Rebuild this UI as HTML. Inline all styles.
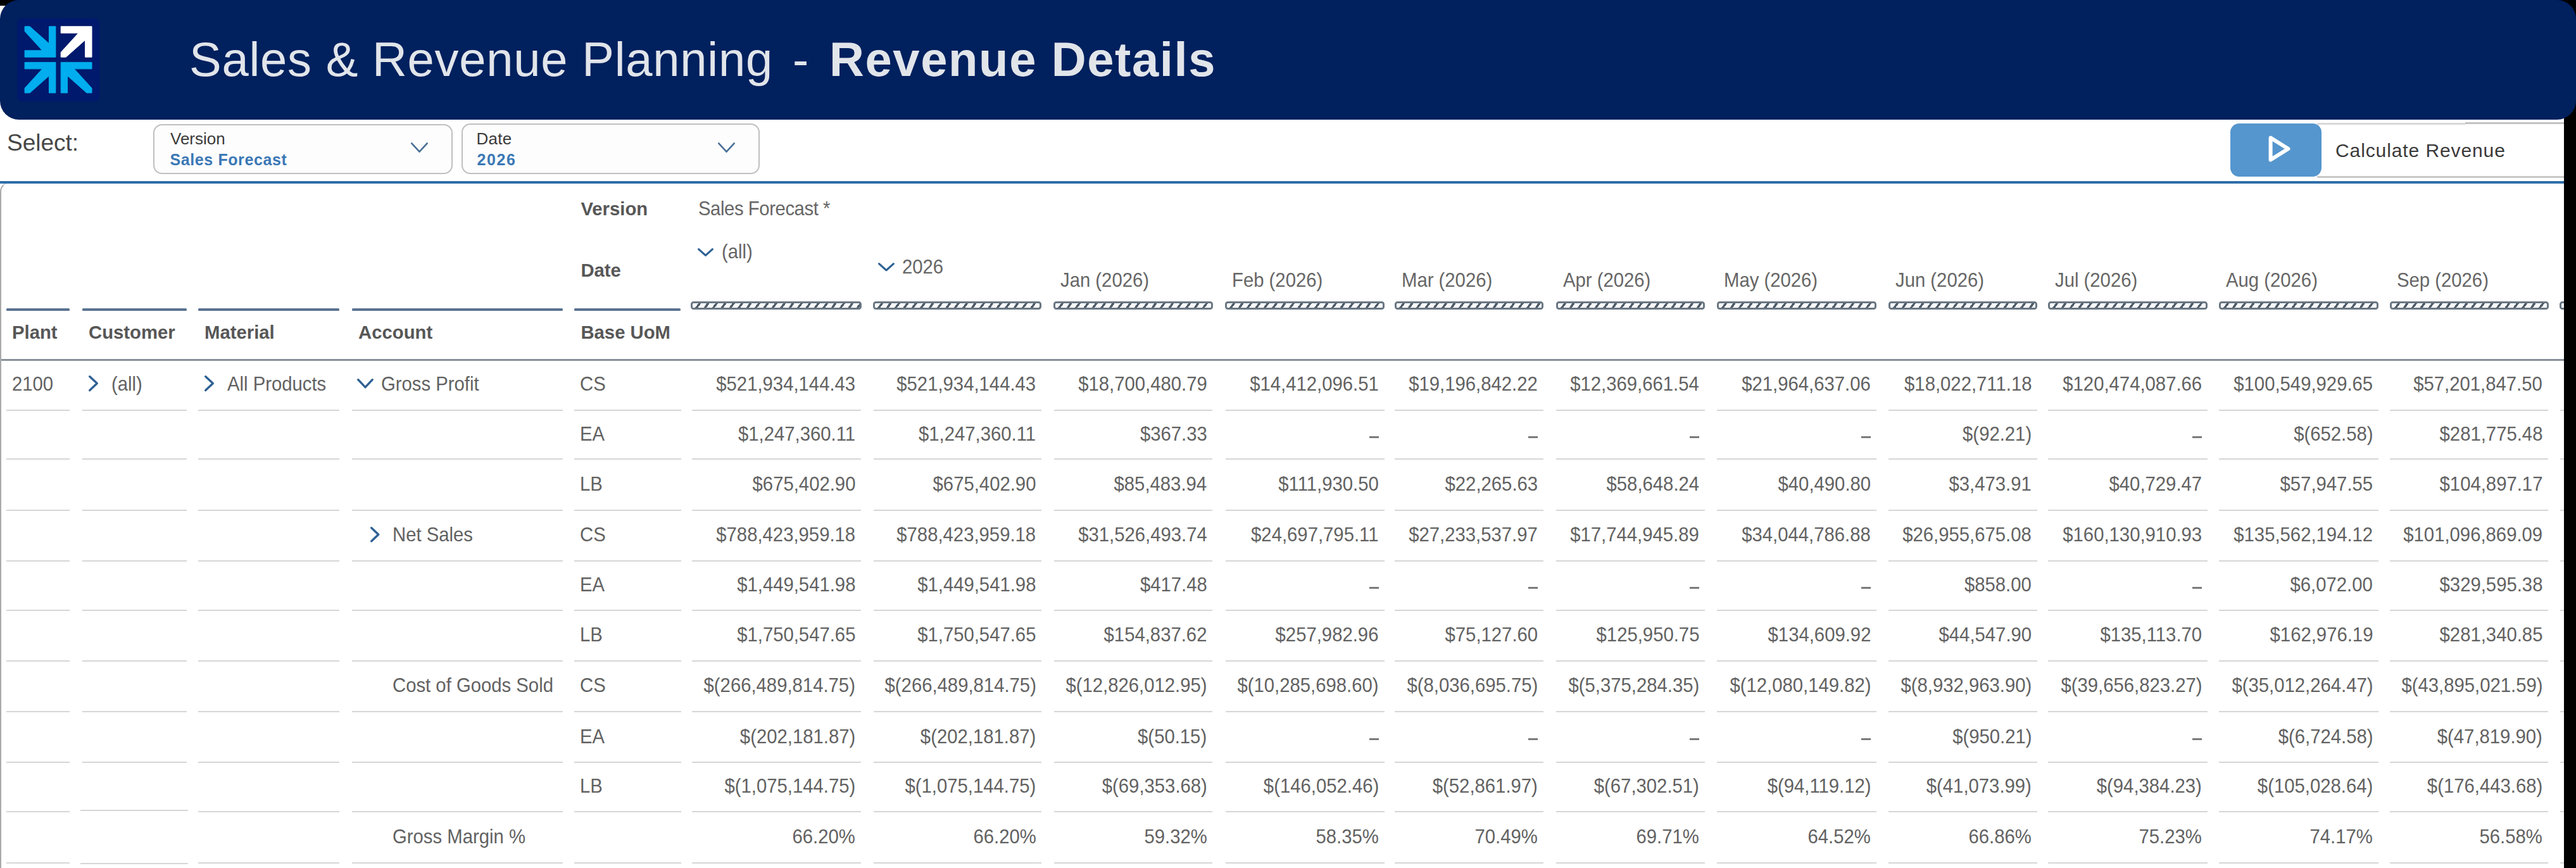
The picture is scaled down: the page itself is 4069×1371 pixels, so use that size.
<!DOCTYPE html><html><head><meta charset="utf-8"><style>
html,body{margin:0;padding:0;}
body{width:4069px;height:1371px;overflow:hidden;position:relative;background:#fff;font-family:"Liberation Sans", sans-serif;}
.t{position:absolute;white-space:nowrap;line-height:1;}
.r{position:absolute;}
.hb{position:absolute;top:475.5px;height:13px;box-sizing:border-box;border:3.4px solid #6a7783;border-radius:4.5px;
background:repeating-linear-gradient(126deg,#fafafa 0 7.4px,#4f5c6a 7.4px 10.84px);}

</style></head><body>
<div class="r" style="left:0.00px;top:0.00px;width:40.00px;height:9.00px;background:#000;"></div>
<div class="r" style="left:4020.00px;top:0.00px;width:49.00px;height:40.00px;background:#000;"></div>
<div class="r" style="left:4050.00px;top:150.00px;width:19.00px;height:38.50px;background:#000;"></div>
<div class="r" style="left:0;top:0;width:4069px;height:188.5px;background:#00205e;border-radius:30px;"></div>
<div class="r" style="left:27px;top:29px;width:130px;height:131px;background:#00196d;border-radius:8px;"></div>
<svg class="r" style="left:27px;top:29px" width="130" height="131" viewBox="0 0 130 131">
<g fill="#00adee" stroke="#00adee" stroke-width="1" stroke-linejoin="round"><polygon points="12.10,12.80 20.10,12.80 50.50,39.80 50.50,12.80 60.90,12.80 60.90,61.20 12.10,61.20 12.10,50.80 39.80,50.80 12.10,20.40"/><polygon points="12.10,117.80 20.10,117.80 50.50,90.80 50.50,117.80 60.90,117.80 60.90,69.40 12.10,69.40 12.10,79.80 39.80,79.80 12.10,110.20"/><polygon points="118.00,117.80 110.00,117.80 79.60,90.80 79.60,117.80 69.20,117.80 69.20,69.40 118.00,69.40 118.00,79.80 90.30,79.80 118.00,110.20"/></g>
<g fill="#fff" stroke="#fff" stroke-width="1" stroke-linejoin="round"><polygon points="69.20,61.20 77.20,61.20 107.60,34.20 107.60,61.20 118.00,61.20 118.00,12.80 69.20,12.80 69.20,23.20 96.90,23.20 69.20,53.60"/></g></svg>
<div class="t" style="top:55.65px;font-size:76px;font-weight:400;color:#e1e5ea;letter-spacing:0.74px;left:299.00px;">Sales &amp; Revenue Planning</div>
<div class="t" style="top:55.65px;font-size:76px;font-weight:400;color:#e1e5ea;left:1252.00px;">-</div>
<div class="t" style="top:55.65px;font-size:76px;font-weight:700;color:#e1e5ea;letter-spacing:1.6px;left:1310.00px;">Revenue Details</div>
<div class="t" style="top:207.27px;font-size:37px;font-weight:400;color:#474747;left:11.00px;">Select:</div>
<div class="r" style="left:242px;top:195.5px;width:473px;height:79px;box-sizing:border-box;border:2px solid #bfbfbf;border-radius:14px;background:#fdfdfd;"></div>
<div class="t" style="top:205.99px;font-size:26px;font-weight:400;color:#3a3a3a;left:269.00px;">Version</div>
<div class="t" style="top:239.53px;font-size:25px;font-weight:700;color:#3b78b5;letter-spacing:0.6px;left:268.50px;">Sales Forecast</div>
<svg class="r" style="left:645.5px;top:222px" width="33" height="22" viewBox="-3 -3 33 22"><polyline points="1.30,1.30 13.50,14.70 25.70,1.30" fill="none" stroke="#4a6f96" stroke-width="2.6" stroke-linecap="round" stroke-linejoin="round"/></svg>
<div class="r" style="left:729px;top:195px;width:471px;height:80px;box-sizing:border-box;border:2px solid #bfbfbf;border-radius:14px;background:#fdfdfd;"></div>
<div class="t" style="top:205.99px;font-size:26px;font-weight:400;color:#3a3a3a;letter-spacing:0.3px;left:752.40px;">Date</div>
<div class="t" style="top:239.53px;font-size:25px;font-weight:700;color:#3b78b5;letter-spacing:1.6px;left:753.50px;">2026</div>
<svg class="r" style="left:1130.7px;top:222px" width="33" height="22" viewBox="-3 -3 33 22"><polyline points="1.30,1.30 13.50,14.70 25.70,1.30" fill="none" stroke="#4a6f96" stroke-width="2.6" stroke-linecap="round" stroke-linejoin="round"/></svg>
<div class="r" style="left:3660.00px;top:194.40px;width:234.00px;height:3.00px;background:#d8d8d8;"></div>
<div class="r" style="left:3894.00px;top:193.00px;width:156.00px;height:3.00px;background:#c2c2c2;"></div>
<div class="r" style="left:3660.00px;top:277.50px;width:390.00px;height:3.20px;background:#c8c8c8;"></div>
<div class="r" style="left:3523px;top:195px;width:144px;height:84px;background:#5596ce;border-radius:14px;"></div>
<svg class="r" style="left:3570px;top:205px" width="60" height="60" viewBox="0 0 60 60"><polygon points="16.6,12.6 16.6,47.4 44.5,30" fill="none" stroke="#fff" stroke-width="6" stroke-linejoin="round"/></svg>
<div class="t" style="top:222.60px;font-size:30px;font-weight:400;color:#3a3a3a;letter-spacing:0.9px;left:3689.00px;">Calculate Revenue</div>
<div class="r" style="left:0;top:287px;width:40px;height:1100px;box-sizing:border-box;border-left:2.4px solid #a9a9a9;border-top:2px solid #d0d0d0;border-top-left-radius:16px;"></div>
<div class="r" style="left:0.00px;top:286.00px;width:4050.00px;height:4.00px;background:#2f6ea9;"></div>
<div class="t" style="top:315.19px;font-size:29.3px;font-weight:700;color:#575757;left:917.40px;">Version</div>
<div class="t" style="top:313.58px;font-size:31.2px;font-weight:400;color:#666;letter-spacing:-0.45px;left:1103.00px;transform:scaleX(0.939);transform-origin:left center;">Sales Forecast *</div>
<div class="t" style="top:412.19px;font-size:29.3px;font-weight:700;color:#575757;left:917.40px;">Date</div>
<svg class="r" style="left:1099px;top:389px" width="31" height="19" viewBox="-3 -3 31 19"><polyline points="1.60,1.60 12.50,11.40 23.40,1.60" fill="none" stroke="#2e6194" stroke-width="3.2" stroke-linecap="round" stroke-linejoin="round"/></svg>
<div class="t" style="top:381.58px;font-size:31.2px;font-weight:400;color:#666;left:1140.00px;transform:scaleX(0.939);transform-origin:left center;">(all)</div>
<svg class="r" style="left:1384px;top:412px" width="32" height="19.5" viewBox="-3 -3 32 19.5"><polyline points="1.60,1.60 13.00,11.90 24.40,1.60" fill="none" stroke="#2e6194" stroke-width="3.2" stroke-linecap="round" stroke-linejoin="round"/></svg>
<div class="t" style="top:405.58px;font-size:31.2px;font-weight:400;color:#666;left:1425.40px;transform:scaleX(0.939);transform-origin:left center;">2026</div>
<div class="t" style="top:426.58px;font-size:31.2px;font-weight:400;color:#666;left:1674.50px;transform:scaleX(0.939);transform-origin:left center;">Jan (2026)</div>
<div class="t" style="top:426.58px;font-size:31.2px;font-weight:400;color:#666;left:1945.50px;transform:scaleX(0.939);transform-origin:left center;">Feb (2026)</div>
<div class="t" style="top:426.58px;font-size:31.2px;font-weight:400;color:#666;left:2213.50px;transform:scaleX(0.939);transform-origin:left center;">Mar (2026)</div>
<div class="t" style="top:426.58px;font-size:31.2px;font-weight:400;color:#666;left:2468.50px;transform:scaleX(0.939);transform-origin:left center;">Apr (2026)</div>
<div class="t" style="top:426.58px;font-size:31.2px;font-weight:400;color:#666;left:2722.50px;transform:scaleX(0.939);transform-origin:left center;">May (2026)</div>
<div class="t" style="top:426.58px;font-size:31.2px;font-weight:400;color:#666;left:2993.50px;transform:scaleX(0.939);transform-origin:left center;">Jun (2026)</div>
<div class="t" style="top:426.58px;font-size:31.2px;font-weight:400;color:#666;left:3245.50px;transform:scaleX(0.939);transform-origin:left center;">Jul (2026)</div>
<div class="t" style="top:426.58px;font-size:31.2px;font-weight:400;color:#666;left:3515.50px;transform:scaleX(0.939);transform-origin:left center;">Aug (2026)</div>
<div class="t" style="top:426.58px;font-size:31.2px;font-weight:400;color:#666;left:3785.50px;transform:scaleX(0.939);transform-origin:left center;">Sep (2026)</div>
<div class="hb" style="left:1091px;width:270px;"></div>
<div class="hb" style="left:1379px;width:266px;"></div>
<div class="hb" style="left:1664px;width:252px;"></div>
<div class="hb" style="left:1935px;width:252px;"></div>
<div class="hb" style="left:2203px;width:235px;"></div>
<div class="hb" style="left:2458px;width:235px;"></div>
<div class="hb" style="left:2712px;width:252px;"></div>
<div class="hb" style="left:2983px;width:235px;"></div>
<div class="hb" style="left:3235px;width:252px;"></div>
<div class="hb" style="left:3505px;width:252px;"></div>
<div class="hb" style="left:3775px;width:251px;"></div>
<div class="hb" style="left:4043px;width:257px;"></div>
<div class="r" style="left:9.70px;top:487.30px;width:100.80px;height:3.70px;background:#5a7390;border-radius:1.5px;"></div>
<div class="r" style="left:129.50px;top:487.30px;width:165.00px;height:3.70px;background:#5a7390;border-radius:1.5px;"></div>
<div class="r" style="left:313.00px;top:487.30px;width:223.00px;height:3.70px;background:#5a7390;border-radius:1.5px;"></div>
<div class="r" style="left:555.50px;top:487.30px;width:333.50px;height:3.70px;background:#5a7390;border-radius:1.5px;"></div>
<div class="r" style="left:906.70px;top:487.30px;width:168.80px;height:3.70px;background:#5a7390;border-radius:1.5px;"></div>
<div class="t" style="top:510.19px;font-size:29.3px;font-weight:700;color:#575757;left:19.00px;">Plant</div>
<div class="t" style="top:510.19px;font-size:29.3px;font-weight:700;color:#575757;left:140.00px;">Customer</div>
<div class="t" style="top:510.19px;font-size:29.3px;font-weight:700;color:#575757;left:323.00px;">Material</div>
<div class="t" style="top:510.19px;font-size:29.3px;font-weight:700;color:#575757;left:566.00px;">Account</div>
<div class="t" style="top:510.19px;font-size:29.3px;font-weight:700;color:#575757;left:917.40px;">Base UoM</div>
<div class="r" style="left:2.40px;top:566.70px;width:4047.60px;height:3.80px;background:#88919a;"></div>
<div class="r" style="left:9.70px;top:647.00px;width:100.80px;height:2.00px;background:#d6d6d6;"></div>
<div class="r" style="left:129.50px;top:647.00px;width:165.00px;height:2.00px;background:#d6d6d6;"></div>
<div class="r" style="left:313.00px;top:647.00px;width:223.00px;height:2.00px;background:#d6d6d6;"></div>
<div class="r" style="left:556.00px;top:647.00px;width:333.00px;height:2.00px;background:#d6d6d6;"></div>
<div class="r" style="left:906.70px;top:647.00px;width:169.30px;height:2.00px;background:#d6d6d6;"></div>
<div class="r" style="left:1092.60px;top:647.00px;width:267.40px;height:2.00px;background:#d6d6d6;"></div>
<div class="r" style="left:1379.60px;top:647.00px;width:265.70px;height:2.00px;background:#d6d6d6;"></div>
<div class="r" style="left:1665.00px;top:647.00px;width:250.30px;height:2.00px;background:#d6d6d6;"></div>
<div class="r" style="left:1935.50px;top:647.00px;width:251.10px;height:2.00px;background:#d6d6d6;"></div>
<div class="r" style="left:2203.00px;top:647.00px;width:235.00px;height:2.00px;background:#d6d6d6;"></div>
<div class="r" style="left:2458.00px;top:647.00px;width:235.00px;height:2.00px;background:#d6d6d6;"></div>
<div class="r" style="left:2712.00px;top:647.00px;width:252.00px;height:2.00px;background:#d6d6d6;"></div>
<div class="r" style="left:2983.00px;top:647.00px;width:235.00px;height:2.00px;background:#d6d6d6;"></div>
<div class="r" style="left:3235.00px;top:647.00px;width:252.00px;height:2.00px;background:#d6d6d6;"></div>
<div class="r" style="left:3505.00px;top:647.00px;width:252.00px;height:2.00px;background:#d6d6d6;"></div>
<div class="r" style="left:3775.00px;top:647.00px;width:250.00px;height:2.00px;background:#d6d6d6;"></div>
<div class="r" style="left:4044.00px;top:647.00px;width:256.00px;height:2.00px;background:#d6d6d6;"></div>
<div class="r" style="left:9.70px;top:724.30px;width:100.80px;height:2.00px;background:#d6d6d6;"></div>
<div class="r" style="left:129.50px;top:724.30px;width:165.00px;height:2.00px;background:#d6d6d6;"></div>
<div class="r" style="left:313.00px;top:724.30px;width:223.00px;height:2.00px;background:#d6d6d6;"></div>
<div class="r" style="left:556.00px;top:724.30px;width:333.00px;height:2.00px;background:#d6d6d6;"></div>
<div class="r" style="left:906.70px;top:724.30px;width:169.30px;height:2.00px;background:#d6d6d6;"></div>
<div class="r" style="left:1092.60px;top:724.30px;width:267.40px;height:2.00px;background:#d6d6d6;"></div>
<div class="r" style="left:1379.60px;top:724.30px;width:265.70px;height:2.00px;background:#d6d6d6;"></div>
<div class="r" style="left:1665.00px;top:724.30px;width:250.30px;height:2.00px;background:#d6d6d6;"></div>
<div class="r" style="left:1935.50px;top:724.30px;width:251.10px;height:2.00px;background:#d6d6d6;"></div>
<div class="r" style="left:2203.00px;top:724.30px;width:235.00px;height:2.00px;background:#d6d6d6;"></div>
<div class="r" style="left:2458.00px;top:724.30px;width:235.00px;height:2.00px;background:#d6d6d6;"></div>
<div class="r" style="left:2712.00px;top:724.30px;width:252.00px;height:2.00px;background:#d6d6d6;"></div>
<div class="r" style="left:2983.00px;top:724.30px;width:235.00px;height:2.00px;background:#d6d6d6;"></div>
<div class="r" style="left:3235.00px;top:724.30px;width:252.00px;height:2.00px;background:#d6d6d6;"></div>
<div class="r" style="left:3505.00px;top:724.30px;width:252.00px;height:2.00px;background:#d6d6d6;"></div>
<div class="r" style="left:3775.00px;top:724.30px;width:250.00px;height:2.00px;background:#d6d6d6;"></div>
<div class="r" style="left:4044.00px;top:724.30px;width:256.00px;height:2.00px;background:#d6d6d6;"></div>
<div class="r" style="left:9.70px;top:804.50px;width:100.80px;height:2.00px;background:#d6d6d6;"></div>
<div class="r" style="left:129.50px;top:804.50px;width:165.00px;height:2.00px;background:#d6d6d6;"></div>
<div class="r" style="left:313.00px;top:804.50px;width:223.00px;height:2.00px;background:#d6d6d6;"></div>
<div class="r" style="left:556.00px;top:804.50px;width:333.00px;height:2.00px;background:#d6d6d6;"></div>
<div class="r" style="left:906.70px;top:804.50px;width:169.30px;height:2.00px;background:#d6d6d6;"></div>
<div class="r" style="left:1092.60px;top:804.50px;width:267.40px;height:2.00px;background:#d6d6d6;"></div>
<div class="r" style="left:1379.60px;top:804.50px;width:265.70px;height:2.00px;background:#d6d6d6;"></div>
<div class="r" style="left:1665.00px;top:804.50px;width:250.30px;height:2.00px;background:#d6d6d6;"></div>
<div class="r" style="left:1935.50px;top:804.50px;width:251.10px;height:2.00px;background:#d6d6d6;"></div>
<div class="r" style="left:2203.00px;top:804.50px;width:235.00px;height:2.00px;background:#d6d6d6;"></div>
<div class="r" style="left:2458.00px;top:804.50px;width:235.00px;height:2.00px;background:#d6d6d6;"></div>
<div class="r" style="left:2712.00px;top:804.50px;width:252.00px;height:2.00px;background:#d6d6d6;"></div>
<div class="r" style="left:2983.00px;top:804.50px;width:235.00px;height:2.00px;background:#d6d6d6;"></div>
<div class="r" style="left:3235.00px;top:804.50px;width:252.00px;height:2.00px;background:#d6d6d6;"></div>
<div class="r" style="left:3505.00px;top:804.50px;width:252.00px;height:2.00px;background:#d6d6d6;"></div>
<div class="r" style="left:3775.00px;top:804.50px;width:250.00px;height:2.00px;background:#d6d6d6;"></div>
<div class="r" style="left:4044.00px;top:804.50px;width:256.00px;height:2.00px;background:#d6d6d6;"></div>
<div class="r" style="left:9.70px;top:884.70px;width:100.80px;height:2.00px;background:#d6d6d6;"></div>
<div class="r" style="left:129.50px;top:884.70px;width:165.00px;height:2.00px;background:#d6d6d6;"></div>
<div class="r" style="left:313.00px;top:884.70px;width:223.00px;height:2.00px;background:#d6d6d6;"></div>
<div class="r" style="left:556.00px;top:884.70px;width:333.00px;height:2.00px;background:#d6d6d6;"></div>
<div class="r" style="left:906.70px;top:884.70px;width:169.30px;height:2.00px;background:#d6d6d6;"></div>
<div class="r" style="left:1092.60px;top:884.70px;width:267.40px;height:2.00px;background:#d6d6d6;"></div>
<div class="r" style="left:1379.60px;top:884.70px;width:265.70px;height:2.00px;background:#d6d6d6;"></div>
<div class="r" style="left:1665.00px;top:884.70px;width:250.30px;height:2.00px;background:#d6d6d6;"></div>
<div class="r" style="left:1935.50px;top:884.70px;width:251.10px;height:2.00px;background:#d6d6d6;"></div>
<div class="r" style="left:2203.00px;top:884.70px;width:235.00px;height:2.00px;background:#d6d6d6;"></div>
<div class="r" style="left:2458.00px;top:884.70px;width:235.00px;height:2.00px;background:#d6d6d6;"></div>
<div class="r" style="left:2712.00px;top:884.70px;width:252.00px;height:2.00px;background:#d6d6d6;"></div>
<div class="r" style="left:2983.00px;top:884.70px;width:235.00px;height:2.00px;background:#d6d6d6;"></div>
<div class="r" style="left:3235.00px;top:884.70px;width:252.00px;height:2.00px;background:#d6d6d6;"></div>
<div class="r" style="left:3505.00px;top:884.70px;width:252.00px;height:2.00px;background:#d6d6d6;"></div>
<div class="r" style="left:3775.00px;top:884.70px;width:250.00px;height:2.00px;background:#d6d6d6;"></div>
<div class="r" style="left:4044.00px;top:884.70px;width:256.00px;height:2.00px;background:#d6d6d6;"></div>
<div class="r" style="left:9.70px;top:962.50px;width:100.80px;height:2.00px;background:#d6d6d6;"></div>
<div class="r" style="left:129.50px;top:962.50px;width:165.00px;height:2.00px;background:#d6d6d6;"></div>
<div class="r" style="left:313.00px;top:962.50px;width:223.00px;height:2.00px;background:#d6d6d6;"></div>
<div class="r" style="left:556.00px;top:962.50px;width:333.00px;height:2.00px;background:#d6d6d6;"></div>
<div class="r" style="left:906.70px;top:962.50px;width:169.30px;height:2.00px;background:#d6d6d6;"></div>
<div class="r" style="left:1092.60px;top:962.50px;width:267.40px;height:2.00px;background:#d6d6d6;"></div>
<div class="r" style="left:1379.60px;top:962.50px;width:265.70px;height:2.00px;background:#d6d6d6;"></div>
<div class="r" style="left:1665.00px;top:962.50px;width:250.30px;height:2.00px;background:#d6d6d6;"></div>
<div class="r" style="left:1935.50px;top:962.50px;width:251.10px;height:2.00px;background:#d6d6d6;"></div>
<div class="r" style="left:2203.00px;top:962.50px;width:235.00px;height:2.00px;background:#d6d6d6;"></div>
<div class="r" style="left:2458.00px;top:962.50px;width:235.00px;height:2.00px;background:#d6d6d6;"></div>
<div class="r" style="left:2712.00px;top:962.50px;width:252.00px;height:2.00px;background:#d6d6d6;"></div>
<div class="r" style="left:2983.00px;top:962.50px;width:235.00px;height:2.00px;background:#d6d6d6;"></div>
<div class="r" style="left:3235.00px;top:962.50px;width:252.00px;height:2.00px;background:#d6d6d6;"></div>
<div class="r" style="left:3505.00px;top:962.50px;width:252.00px;height:2.00px;background:#d6d6d6;"></div>
<div class="r" style="left:3775.00px;top:962.50px;width:250.00px;height:2.00px;background:#d6d6d6;"></div>
<div class="r" style="left:4044.00px;top:962.50px;width:256.00px;height:2.00px;background:#d6d6d6;"></div>
<div class="r" style="left:9.70px;top:1042.70px;width:100.80px;height:2.00px;background:#d6d6d6;"></div>
<div class="r" style="left:129.50px;top:1042.70px;width:165.00px;height:2.00px;background:#d6d6d6;"></div>
<div class="r" style="left:313.00px;top:1042.70px;width:223.00px;height:2.00px;background:#d6d6d6;"></div>
<div class="r" style="left:556.00px;top:1042.70px;width:333.00px;height:2.00px;background:#d6d6d6;"></div>
<div class="r" style="left:906.70px;top:1042.70px;width:169.30px;height:2.00px;background:#d6d6d6;"></div>
<div class="r" style="left:1092.60px;top:1042.70px;width:267.40px;height:2.00px;background:#d6d6d6;"></div>
<div class="r" style="left:1379.60px;top:1042.70px;width:265.70px;height:2.00px;background:#d6d6d6;"></div>
<div class="r" style="left:1665.00px;top:1042.70px;width:250.30px;height:2.00px;background:#d6d6d6;"></div>
<div class="r" style="left:1935.50px;top:1042.70px;width:251.10px;height:2.00px;background:#d6d6d6;"></div>
<div class="r" style="left:2203.00px;top:1042.70px;width:235.00px;height:2.00px;background:#d6d6d6;"></div>
<div class="r" style="left:2458.00px;top:1042.70px;width:235.00px;height:2.00px;background:#d6d6d6;"></div>
<div class="r" style="left:2712.00px;top:1042.70px;width:252.00px;height:2.00px;background:#d6d6d6;"></div>
<div class="r" style="left:2983.00px;top:1042.70px;width:235.00px;height:2.00px;background:#d6d6d6;"></div>
<div class="r" style="left:3235.00px;top:1042.70px;width:252.00px;height:2.00px;background:#d6d6d6;"></div>
<div class="r" style="left:3505.00px;top:1042.70px;width:252.00px;height:2.00px;background:#d6d6d6;"></div>
<div class="r" style="left:3775.00px;top:1042.70px;width:250.00px;height:2.00px;background:#d6d6d6;"></div>
<div class="r" style="left:4044.00px;top:1042.70px;width:256.00px;height:2.00px;background:#d6d6d6;"></div>
<div class="r" style="left:9.70px;top:1123.30px;width:100.80px;height:2.00px;background:#d6d6d6;"></div>
<div class="r" style="left:129.50px;top:1123.30px;width:165.00px;height:2.00px;background:#d6d6d6;"></div>
<div class="r" style="left:313.00px;top:1123.30px;width:223.00px;height:2.00px;background:#d6d6d6;"></div>
<div class="r" style="left:556.00px;top:1123.30px;width:333.00px;height:2.00px;background:#d6d6d6;"></div>
<div class="r" style="left:906.70px;top:1123.30px;width:169.30px;height:2.00px;background:#d6d6d6;"></div>
<div class="r" style="left:1092.60px;top:1123.30px;width:267.40px;height:2.00px;background:#d6d6d6;"></div>
<div class="r" style="left:1379.60px;top:1123.30px;width:265.70px;height:2.00px;background:#d6d6d6;"></div>
<div class="r" style="left:1665.00px;top:1123.30px;width:250.30px;height:2.00px;background:#d6d6d6;"></div>
<div class="r" style="left:1935.50px;top:1123.30px;width:251.10px;height:2.00px;background:#d6d6d6;"></div>
<div class="r" style="left:2203.00px;top:1123.30px;width:235.00px;height:2.00px;background:#d6d6d6;"></div>
<div class="r" style="left:2458.00px;top:1123.30px;width:235.00px;height:2.00px;background:#d6d6d6;"></div>
<div class="r" style="left:2712.00px;top:1123.30px;width:252.00px;height:2.00px;background:#d6d6d6;"></div>
<div class="r" style="left:2983.00px;top:1123.30px;width:235.00px;height:2.00px;background:#d6d6d6;"></div>
<div class="r" style="left:3235.00px;top:1123.30px;width:252.00px;height:2.00px;background:#d6d6d6;"></div>
<div class="r" style="left:3505.00px;top:1123.30px;width:252.00px;height:2.00px;background:#d6d6d6;"></div>
<div class="r" style="left:3775.00px;top:1123.30px;width:250.00px;height:2.00px;background:#d6d6d6;"></div>
<div class="r" style="left:4044.00px;top:1123.30px;width:256.00px;height:2.00px;background:#d6d6d6;"></div>
<div class="r" style="left:9.70px;top:1203.40px;width:100.80px;height:2.00px;background:#d6d6d6;"></div>
<div class="r" style="left:129.50px;top:1203.40px;width:165.00px;height:2.00px;background:#d6d6d6;"></div>
<div class="r" style="left:313.00px;top:1203.40px;width:223.00px;height:2.00px;background:#d6d6d6;"></div>
<div class="r" style="left:556.00px;top:1203.40px;width:333.00px;height:2.00px;background:#d6d6d6;"></div>
<div class="r" style="left:906.70px;top:1203.40px;width:169.30px;height:2.00px;background:#d6d6d6;"></div>
<div class="r" style="left:1092.60px;top:1203.40px;width:267.40px;height:2.00px;background:#d6d6d6;"></div>
<div class="r" style="left:1379.60px;top:1203.40px;width:265.70px;height:2.00px;background:#d6d6d6;"></div>
<div class="r" style="left:1665.00px;top:1203.40px;width:250.30px;height:2.00px;background:#d6d6d6;"></div>
<div class="r" style="left:1935.50px;top:1203.40px;width:251.10px;height:2.00px;background:#d6d6d6;"></div>
<div class="r" style="left:2203.00px;top:1203.40px;width:235.00px;height:2.00px;background:#d6d6d6;"></div>
<div class="r" style="left:2458.00px;top:1203.40px;width:235.00px;height:2.00px;background:#d6d6d6;"></div>
<div class="r" style="left:2712.00px;top:1203.40px;width:252.00px;height:2.00px;background:#d6d6d6;"></div>
<div class="r" style="left:2983.00px;top:1203.40px;width:235.00px;height:2.00px;background:#d6d6d6;"></div>
<div class="r" style="left:3235.00px;top:1203.40px;width:252.00px;height:2.00px;background:#d6d6d6;"></div>
<div class="r" style="left:3505.00px;top:1203.40px;width:252.00px;height:2.00px;background:#d6d6d6;"></div>
<div class="r" style="left:3775.00px;top:1203.40px;width:250.00px;height:2.00px;background:#d6d6d6;"></div>
<div class="r" style="left:4044.00px;top:1203.40px;width:256.00px;height:2.00px;background:#d6d6d6;"></div>
<div class="r" style="left:9.70px;top:1281.20px;width:100.80px;height:2.00px;background:#d6d6d6;"></div>
<div class="r" style="left:126.50px;top:1279.20px;width:170.10px;height:2.00px;background:#d6d6d6;"></div>
<div class="r" style="left:313.00px;top:1281.20px;width:223.00px;height:2.00px;background:#d6d6d6;"></div>
<div class="r" style="left:556.00px;top:1281.20px;width:333.00px;height:2.00px;background:#d6d6d6;"></div>
<div class="r" style="left:906.70px;top:1281.20px;width:169.30px;height:2.00px;background:#d6d6d6;"></div>
<div class="r" style="left:1092.60px;top:1281.20px;width:267.40px;height:2.00px;background:#d6d6d6;"></div>
<div class="r" style="left:1379.60px;top:1281.20px;width:265.70px;height:2.00px;background:#d6d6d6;"></div>
<div class="r" style="left:1665.00px;top:1281.20px;width:250.30px;height:2.00px;background:#d6d6d6;"></div>
<div class="r" style="left:1935.50px;top:1281.20px;width:251.10px;height:2.00px;background:#d6d6d6;"></div>
<div class="r" style="left:2203.00px;top:1281.20px;width:235.00px;height:2.00px;background:#d6d6d6;"></div>
<div class="r" style="left:2458.00px;top:1281.20px;width:235.00px;height:2.00px;background:#d6d6d6;"></div>
<div class="r" style="left:2712.00px;top:1281.20px;width:252.00px;height:2.00px;background:#d6d6d6;"></div>
<div class="r" style="left:2983.00px;top:1281.20px;width:235.00px;height:2.00px;background:#d6d6d6;"></div>
<div class="r" style="left:3235.00px;top:1281.20px;width:252.00px;height:2.00px;background:#d6d6d6;"></div>
<div class="r" style="left:3505.00px;top:1281.20px;width:252.00px;height:2.00px;background:#d6d6d6;"></div>
<div class="r" style="left:3775.00px;top:1281.20px;width:250.00px;height:2.00px;background:#d6d6d6;"></div>
<div class="r" style="left:4044.00px;top:1281.20px;width:256.00px;height:2.00px;background:#d6d6d6;"></div>
<div class="r" style="left:9.70px;top:1361.70px;width:100.80px;height:2.00px;background:#d6d6d6;"></div>
<div class="r" style="left:126.50px;top:1363.00px;width:170.10px;height:2.00px;background:#d6d6d6;"></div>
<div class="r" style="left:313.00px;top:1361.70px;width:223.00px;height:2.00px;background:#d6d6d6;"></div>
<div class="r" style="left:556.00px;top:1361.70px;width:333.00px;height:2.00px;background:#d6d6d6;"></div>
<div class="r" style="left:906.70px;top:1361.70px;width:169.30px;height:2.00px;background:#d6d6d6;"></div>
<div class="r" style="left:1092.60px;top:1361.70px;width:267.40px;height:2.00px;background:#d6d6d6;"></div>
<div class="r" style="left:1379.60px;top:1361.70px;width:265.70px;height:2.00px;background:#d6d6d6;"></div>
<div class="r" style="left:1665.00px;top:1361.70px;width:250.30px;height:2.00px;background:#d6d6d6;"></div>
<div class="r" style="left:1935.50px;top:1361.70px;width:251.10px;height:2.00px;background:#d6d6d6;"></div>
<div class="r" style="left:2203.00px;top:1361.70px;width:235.00px;height:2.00px;background:#d6d6d6;"></div>
<div class="r" style="left:2458.00px;top:1361.70px;width:235.00px;height:2.00px;background:#d6d6d6;"></div>
<div class="r" style="left:2712.00px;top:1361.70px;width:252.00px;height:2.00px;background:#d6d6d6;"></div>
<div class="r" style="left:2983.00px;top:1361.70px;width:235.00px;height:2.00px;background:#d6d6d6;"></div>
<div class="r" style="left:3235.00px;top:1361.70px;width:252.00px;height:2.00px;background:#d6d6d6;"></div>
<div class="r" style="left:3505.00px;top:1361.70px;width:252.00px;height:2.00px;background:#d6d6d6;"></div>
<div class="r" style="left:3775.00px;top:1361.70px;width:250.00px;height:2.00px;background:#d6d6d6;"></div>
<div class="r" style="left:4044.00px;top:1361.70px;width:256.00px;height:2.00px;background:#d6d6d6;"></div>
<div class="t" style="top:591.43px;font-size:31.2px;font-weight:400;color:#626262;left:915.80px;transform:scaleX(0.939);transform-origin:left center;">CS</div>
<div class="t" style="top:591.43px;font-size:31.2px;font-weight:400;color:#626262;right:2717.80px;transform:scaleX(0.939);transform-origin:right center;">$521,934,144.43</div>
<div class="t" style="top:591.43px;font-size:31.2px;font-weight:400;color:#626262;right:2432.50px;transform:scaleX(0.939);transform-origin:right center;">$521,934,144.43</div>
<div class="t" style="top:591.43px;font-size:31.2px;font-weight:400;color:#626262;right:2162.50px;transform:scaleX(0.939);transform-origin:right center;">$18,700,480.79</div>
<div class="t" style="top:591.43px;font-size:31.2px;font-weight:400;color:#626262;right:1891.20px;transform:scaleX(0.939);transform-origin:right center;">$14,412,096.51</div>
<div class="t" style="top:591.43px;font-size:31.2px;font-weight:400;color:#626262;right:1639.80px;transform:scaleX(0.939);transform-origin:right center;">$19,196,842.22</div>
<div class="t" style="top:591.43px;font-size:31.2px;font-weight:400;color:#626262;right:1384.80px;transform:scaleX(0.939);transform-origin:right center;">$12,369,661.54</div>
<div class="t" style="top:591.43px;font-size:31.2px;font-weight:400;color:#626262;right:1113.80px;transform:scaleX(0.939);transform-origin:right center;">$21,964,637.06</div>
<div class="t" style="top:591.43px;font-size:31.2px;font-weight:400;color:#626262;right:859.80px;transform:scaleX(0.939);transform-origin:right center;">$18,022,711.18</div>
<div class="t" style="top:591.43px;font-size:31.2px;font-weight:400;color:#626262;right:590.80px;transform:scaleX(0.939);transform-origin:right center;">$120,474,087.66</div>
<div class="t" style="top:591.43px;font-size:31.2px;font-weight:400;color:#626262;right:320.80px;transform:scaleX(0.939);transform-origin:right center;">$100,549,929.65</div>
<div class="t" style="top:591.43px;font-size:31.2px;font-weight:400;color:#626262;right:52.80px;transform:scaleX(0.939);transform-origin:right center;">$57,201,847.50</div>
<div class="t" style="top:669.83px;font-size:31.2px;font-weight:400;color:#626262;left:915.80px;transform:scaleX(0.939);transform-origin:left center;">EA</div>
<div class="t" style="top:669.83px;font-size:31.2px;font-weight:400;color:#626262;right:2717.80px;transform:scaleX(0.939);transform-origin:right center;">$1,247,360.11</div>
<div class="t" style="top:669.83px;font-size:31.2px;font-weight:400;color:#626262;right:2432.50px;transform:scaleX(0.939);transform-origin:right center;">$1,247,360.11</div>
<div class="t" style="top:669.83px;font-size:31.2px;font-weight:400;color:#626262;right:2162.50px;transform:scaleX(0.939);transform-origin:right center;">$367.33</div>
<div class="r" style="left:2162.50px;top:688.65px;width:15.00px;height:3.00px;background:#7a7a7a;"></div>
<div class="r" style="left:2413.90px;top:688.65px;width:15.00px;height:3.00px;background:#7a7a7a;"></div>
<div class="r" style="left:2668.90px;top:688.65px;width:15.00px;height:3.00px;background:#7a7a7a;"></div>
<div class="r" style="left:2939.90px;top:688.65px;width:15.00px;height:3.00px;background:#7a7a7a;"></div>
<div class="t" style="top:669.83px;font-size:31.2px;font-weight:400;color:#626262;right:859.80px;transform:scaleX(0.939);transform-origin:right center;">$(92.21)</div>
<div class="r" style="left:3462.90px;top:688.65px;width:15.00px;height:3.00px;background:#7a7a7a;"></div>
<div class="t" style="top:669.83px;font-size:31.2px;font-weight:400;color:#626262;right:320.80px;transform:scaleX(0.939);transform-origin:right center;">$(652.58)</div>
<div class="t" style="top:669.83px;font-size:31.2px;font-weight:400;color:#626262;right:52.80px;transform:scaleX(0.939);transform-origin:right center;">$281,775.48</div>
<div class="t" style="top:748.58px;font-size:31.2px;font-weight:400;color:#626262;left:915.80px;transform:scaleX(0.939);transform-origin:left center;">LB</div>
<div class="t" style="top:748.58px;font-size:31.2px;font-weight:400;color:#626262;right:2717.80px;transform:scaleX(0.939);transform-origin:right center;">$675,402.90</div>
<div class="t" style="top:748.58px;font-size:31.2px;font-weight:400;color:#626262;right:2432.50px;transform:scaleX(0.939);transform-origin:right center;">$675,402.90</div>
<div class="t" style="top:748.58px;font-size:31.2px;font-weight:400;color:#626262;right:2162.50px;transform:scaleX(0.939);transform-origin:right center;">$85,483.94</div>
<div class="t" style="top:748.58px;font-size:31.2px;font-weight:400;color:#626262;right:1891.20px;transform:scaleX(0.939);transform-origin:right center;">$111,930.50</div>
<div class="t" style="top:748.58px;font-size:31.2px;font-weight:400;color:#626262;right:1639.80px;transform:scaleX(0.939);transform-origin:right center;">$22,265.63</div>
<div class="t" style="top:748.58px;font-size:31.2px;font-weight:400;color:#626262;right:1384.80px;transform:scaleX(0.939);transform-origin:right center;">$58,648.24</div>
<div class="t" style="top:748.58px;font-size:31.2px;font-weight:400;color:#626262;right:1113.80px;transform:scaleX(0.939);transform-origin:right center;">$40,490.80</div>
<div class="t" style="top:748.58px;font-size:31.2px;font-weight:400;color:#626262;right:859.80px;transform:scaleX(0.939);transform-origin:right center;">$3,473.91</div>
<div class="t" style="top:748.58px;font-size:31.2px;font-weight:400;color:#626262;right:590.80px;transform:scaleX(0.939);transform-origin:right center;">$40,729.47</div>
<div class="t" style="top:748.58px;font-size:31.2px;font-weight:400;color:#626262;right:320.80px;transform:scaleX(0.939);transform-origin:right center;">$57,947.55</div>
<div class="t" style="top:748.58px;font-size:31.2px;font-weight:400;color:#626262;right:52.80px;transform:scaleX(0.939);transform-origin:right center;">$104,897.17</div>
<div class="t" style="top:828.78px;font-size:31.2px;font-weight:400;color:#626262;left:915.80px;transform:scaleX(0.939);transform-origin:left center;">CS</div>
<div class="t" style="top:828.78px;font-size:31.2px;font-weight:400;color:#626262;right:2717.80px;transform:scaleX(0.939);transform-origin:right center;">$788,423,959.18</div>
<div class="t" style="top:828.78px;font-size:31.2px;font-weight:400;color:#626262;right:2432.50px;transform:scaleX(0.939);transform-origin:right center;">$788,423,959.18</div>
<div class="t" style="top:828.78px;font-size:31.2px;font-weight:400;color:#626262;right:2162.50px;transform:scaleX(0.939);transform-origin:right center;">$31,526,493.74</div>
<div class="t" style="top:828.78px;font-size:31.2px;font-weight:400;color:#626262;right:1891.20px;transform:scaleX(0.939);transform-origin:right center;">$24,697,795.11</div>
<div class="t" style="top:828.78px;font-size:31.2px;font-weight:400;color:#626262;right:1639.80px;transform:scaleX(0.939);transform-origin:right center;">$27,233,537.97</div>
<div class="t" style="top:828.78px;font-size:31.2px;font-weight:400;color:#626262;right:1384.80px;transform:scaleX(0.939);transform-origin:right center;">$17,744,945.89</div>
<div class="t" style="top:828.78px;font-size:31.2px;font-weight:400;color:#626262;right:1113.80px;transform:scaleX(0.939);transform-origin:right center;">$34,044,786.88</div>
<div class="t" style="top:828.78px;font-size:31.2px;font-weight:400;color:#626262;right:859.80px;transform:scaleX(0.939);transform-origin:right center;">$26,955,675.08</div>
<div class="t" style="top:828.78px;font-size:31.2px;font-weight:400;color:#626262;right:590.80px;transform:scaleX(0.939);transform-origin:right center;">$160,130,910.93</div>
<div class="t" style="top:828.78px;font-size:31.2px;font-weight:400;color:#626262;right:320.80px;transform:scaleX(0.939);transform-origin:right center;">$135,562,194.12</div>
<div class="t" style="top:828.78px;font-size:31.2px;font-weight:400;color:#626262;right:52.80px;transform:scaleX(0.939);transform-origin:right center;">$101,096,869.09</div>
<div class="t" style="top:907.78px;font-size:31.2px;font-weight:400;color:#626262;left:915.80px;transform:scaleX(0.939);transform-origin:left center;">EA</div>
<div class="t" style="top:907.78px;font-size:31.2px;font-weight:400;color:#626262;right:2717.80px;transform:scaleX(0.939);transform-origin:right center;">$1,449,541.98</div>
<div class="t" style="top:907.78px;font-size:31.2px;font-weight:400;color:#626262;right:2432.50px;transform:scaleX(0.939);transform-origin:right center;">$1,449,541.98</div>
<div class="t" style="top:907.78px;font-size:31.2px;font-weight:400;color:#626262;right:2162.50px;transform:scaleX(0.939);transform-origin:right center;">$417.48</div>
<div class="r" style="left:2162.50px;top:926.60px;width:15.00px;height:3.00px;background:#7a7a7a;"></div>
<div class="r" style="left:2413.90px;top:926.60px;width:15.00px;height:3.00px;background:#7a7a7a;"></div>
<div class="r" style="left:2668.90px;top:926.60px;width:15.00px;height:3.00px;background:#7a7a7a;"></div>
<div class="r" style="left:2939.90px;top:926.60px;width:15.00px;height:3.00px;background:#7a7a7a;"></div>
<div class="t" style="top:907.78px;font-size:31.2px;font-weight:400;color:#626262;right:859.80px;transform:scaleX(0.939);transform-origin:right center;">$858.00</div>
<div class="r" style="left:3462.90px;top:926.60px;width:15.00px;height:3.00px;background:#7a7a7a;"></div>
<div class="t" style="top:907.78px;font-size:31.2px;font-weight:400;color:#626262;right:320.80px;transform:scaleX(0.939);transform-origin:right center;">$6,072.00</div>
<div class="t" style="top:907.78px;font-size:31.2px;font-weight:400;color:#626262;right:52.80px;transform:scaleX(0.939);transform-origin:right center;">$329,595.38</div>
<div class="t" style="top:986.78px;font-size:31.2px;font-weight:400;color:#626262;left:915.80px;transform:scaleX(0.939);transform-origin:left center;">LB</div>
<div class="t" style="top:986.78px;font-size:31.2px;font-weight:400;color:#626262;right:2717.80px;transform:scaleX(0.939);transform-origin:right center;">$1,750,547.65</div>
<div class="t" style="top:986.78px;font-size:31.2px;font-weight:400;color:#626262;right:2432.50px;transform:scaleX(0.939);transform-origin:right center;">$1,750,547.65</div>
<div class="t" style="top:986.78px;font-size:31.2px;font-weight:400;color:#626262;right:2162.50px;transform:scaleX(0.939);transform-origin:right center;">$154,837.62</div>
<div class="t" style="top:986.78px;font-size:31.2px;font-weight:400;color:#626262;right:1891.20px;transform:scaleX(0.939);transform-origin:right center;">$257,982.96</div>
<div class="t" style="top:986.78px;font-size:31.2px;font-weight:400;color:#626262;right:1639.80px;transform:scaleX(0.939);transform-origin:right center;">$75,127.60</div>
<div class="t" style="top:986.78px;font-size:31.2px;font-weight:400;color:#626262;right:1384.80px;transform:scaleX(0.939);transform-origin:right center;">$125,950.75</div>
<div class="t" style="top:986.78px;font-size:31.2px;font-weight:400;color:#626262;right:1113.80px;transform:scaleX(0.939);transform-origin:right center;">$134,609.92</div>
<div class="t" style="top:986.78px;font-size:31.2px;font-weight:400;color:#626262;right:859.80px;transform:scaleX(0.939);transform-origin:right center;">$44,547.90</div>
<div class="t" style="top:986.78px;font-size:31.2px;font-weight:400;color:#626262;right:590.80px;transform:scaleX(0.939);transform-origin:right center;">$135,113.70</div>
<div class="t" style="top:986.78px;font-size:31.2px;font-weight:400;color:#626262;right:320.80px;transform:scaleX(0.939);transform-origin:right center;">$162,976.19</div>
<div class="t" style="top:986.78px;font-size:31.2px;font-weight:400;color:#626262;right:52.80px;transform:scaleX(0.939);transform-origin:right center;">$281,340.85</div>
<div class="t" style="top:1067.18px;font-size:31.2px;font-weight:400;color:#626262;left:915.80px;transform:scaleX(0.939);transform-origin:left center;">CS</div>
<div class="t" style="top:1067.18px;font-size:31.2px;font-weight:400;color:#626262;right:2717.80px;transform:scaleX(0.939);transform-origin:right center;">$(266,489,814.75)</div>
<div class="t" style="top:1067.18px;font-size:31.2px;font-weight:400;color:#626262;right:2432.50px;transform:scaleX(0.939);transform-origin:right center;">$(266,489,814.75)</div>
<div class="t" style="top:1067.18px;font-size:31.2px;font-weight:400;color:#626262;right:2162.50px;transform:scaleX(0.939);transform-origin:right center;">$(12,826,012.95)</div>
<div class="t" style="top:1067.18px;font-size:31.2px;font-weight:400;color:#626262;right:1891.20px;transform:scaleX(0.939);transform-origin:right center;">$(10,285,698.60)</div>
<div class="t" style="top:1067.18px;font-size:31.2px;font-weight:400;color:#626262;right:1639.80px;transform:scaleX(0.939);transform-origin:right center;">$(8,036,695.75)</div>
<div class="t" style="top:1067.18px;font-size:31.2px;font-weight:400;color:#626262;right:1384.80px;transform:scaleX(0.939);transform-origin:right center;">$(5,375,284.35)</div>
<div class="t" style="top:1067.18px;font-size:31.2px;font-weight:400;color:#626262;right:1113.80px;transform:scaleX(0.939);transform-origin:right center;">$(12,080,149.82)</div>
<div class="t" style="top:1067.18px;font-size:31.2px;font-weight:400;color:#626262;right:859.80px;transform:scaleX(0.939);transform-origin:right center;">$(8,932,963.90)</div>
<div class="t" style="top:1067.18px;font-size:31.2px;font-weight:400;color:#626262;right:590.80px;transform:scaleX(0.939);transform-origin:right center;">$(39,656,823.27)</div>
<div class="t" style="top:1067.18px;font-size:31.2px;font-weight:400;color:#626262;right:320.80px;transform:scaleX(0.939);transform-origin:right center;">$(35,012,264.47)</div>
<div class="t" style="top:1067.18px;font-size:31.2px;font-weight:400;color:#626262;right:52.80px;transform:scaleX(0.939);transform-origin:right center;">$(43,895,021.59)</div>
<div class="t" style="top:1147.53px;font-size:31.2px;font-weight:400;color:#626262;left:915.80px;transform:scaleX(0.939);transform-origin:left center;">EA</div>
<div class="t" style="top:1147.53px;font-size:31.2px;font-weight:400;color:#626262;right:2717.80px;transform:scaleX(0.939);transform-origin:right center;">$(202,181.87)</div>
<div class="t" style="top:1147.53px;font-size:31.2px;font-weight:400;color:#626262;right:2432.50px;transform:scaleX(0.939);transform-origin:right center;">$(202,181.87)</div>
<div class="t" style="top:1147.53px;font-size:31.2px;font-weight:400;color:#626262;right:2162.50px;transform:scaleX(0.939);transform-origin:right center;">$(50.15)</div>
<div class="r" style="left:2162.50px;top:1166.35px;width:15.00px;height:3.00px;background:#7a7a7a;"></div>
<div class="r" style="left:2413.90px;top:1166.35px;width:15.00px;height:3.00px;background:#7a7a7a;"></div>
<div class="r" style="left:2668.90px;top:1166.35px;width:15.00px;height:3.00px;background:#7a7a7a;"></div>
<div class="r" style="left:2939.90px;top:1166.35px;width:15.00px;height:3.00px;background:#7a7a7a;"></div>
<div class="t" style="top:1147.53px;font-size:31.2px;font-weight:400;color:#626262;right:859.80px;transform:scaleX(0.939);transform-origin:right center;">$(950.21)</div>
<div class="r" style="left:3462.90px;top:1166.35px;width:15.00px;height:3.00px;background:#7a7a7a;"></div>
<div class="t" style="top:1147.53px;font-size:31.2px;font-weight:400;color:#626262;right:320.80px;transform:scaleX(0.939);transform-origin:right center;">$(6,724.58)</div>
<div class="t" style="top:1147.53px;font-size:31.2px;font-weight:400;color:#626262;right:52.80px;transform:scaleX(0.939);transform-origin:right center;">$(47,819.90)</div>
<div class="t" style="top:1226.48px;font-size:31.2px;font-weight:400;color:#626262;left:915.80px;transform:scaleX(0.939);transform-origin:left center;">LB</div>
<div class="t" style="top:1226.48px;font-size:31.2px;font-weight:400;color:#626262;right:2717.80px;transform:scaleX(0.939);transform-origin:right center;">$(1,075,144.75)</div>
<div class="t" style="top:1226.48px;font-size:31.2px;font-weight:400;color:#626262;right:2432.50px;transform:scaleX(0.939);transform-origin:right center;">$(1,075,144.75)</div>
<div class="t" style="top:1226.48px;font-size:31.2px;font-weight:400;color:#626262;right:2162.50px;transform:scaleX(0.939);transform-origin:right center;">$(69,353.68)</div>
<div class="t" style="top:1226.48px;font-size:31.2px;font-weight:400;color:#626262;right:1891.20px;transform:scaleX(0.939);transform-origin:right center;">$(146,052.46)</div>
<div class="t" style="top:1226.48px;font-size:31.2px;font-weight:400;color:#626262;right:1639.80px;transform:scaleX(0.939);transform-origin:right center;">$(52,861.97)</div>
<div class="t" style="top:1226.48px;font-size:31.2px;font-weight:400;color:#626262;right:1384.80px;transform:scaleX(0.939);transform-origin:right center;">$(67,302.51)</div>
<div class="t" style="top:1226.48px;font-size:31.2px;font-weight:400;color:#626262;right:1113.80px;transform:scaleX(0.939);transform-origin:right center;">$(94,119.12)</div>
<div class="t" style="top:1226.48px;font-size:31.2px;font-weight:400;color:#626262;right:859.80px;transform:scaleX(0.939);transform-origin:right center;">$(41,073.99)</div>
<div class="t" style="top:1226.48px;font-size:31.2px;font-weight:400;color:#626262;right:590.80px;transform:scaleX(0.939);transform-origin:right center;">$(94,384.23)</div>
<div class="t" style="top:1226.48px;font-size:31.2px;font-weight:400;color:#626262;right:320.80px;transform:scaleX(0.939);transform-origin:right center;">$(105,028.64)</div>
<div class="t" style="top:1226.48px;font-size:31.2px;font-weight:400;color:#626262;right:52.80px;transform:scaleX(0.939);transform-origin:right center;">$(176,443.68)</div>
<div class="t" style="top:1305.63px;font-size:31.2px;font-weight:400;color:#626262;right:2717.80px;transform:scaleX(0.939);transform-origin:right center;">66.20%</div>
<div class="t" style="top:1305.63px;font-size:31.2px;font-weight:400;color:#626262;right:2432.50px;transform:scaleX(0.939);transform-origin:right center;">66.20%</div>
<div class="t" style="top:1305.63px;font-size:31.2px;font-weight:400;color:#626262;right:2162.50px;transform:scaleX(0.939);transform-origin:right center;">59.32%</div>
<div class="t" style="top:1305.63px;font-size:31.2px;font-weight:400;color:#626262;right:1891.20px;transform:scaleX(0.939);transform-origin:right center;">58.35%</div>
<div class="t" style="top:1305.63px;font-size:31.2px;font-weight:400;color:#626262;right:1639.80px;transform:scaleX(0.939);transform-origin:right center;">70.49%</div>
<div class="t" style="top:1305.63px;font-size:31.2px;font-weight:400;color:#626262;right:1384.80px;transform:scaleX(0.939);transform-origin:right center;">69.71%</div>
<div class="t" style="top:1305.63px;font-size:31.2px;font-weight:400;color:#626262;right:1113.80px;transform:scaleX(0.939);transform-origin:right center;">64.52%</div>
<div class="t" style="top:1305.63px;font-size:31.2px;font-weight:400;color:#626262;right:859.80px;transform:scaleX(0.939);transform-origin:right center;">66.86%</div>
<div class="t" style="top:1305.63px;font-size:31.2px;font-weight:400;color:#626262;right:590.80px;transform:scaleX(0.939);transform-origin:right center;">75.23%</div>
<div class="t" style="top:1305.63px;font-size:31.2px;font-weight:400;color:#626262;right:320.80px;transform:scaleX(0.939);transform-origin:right center;">74.17%</div>
<div class="t" style="top:1305.63px;font-size:31.2px;font-weight:400;color:#626262;right:52.80px;transform:scaleX(0.939);transform-origin:right center;">56.58%</div>
<div class="t" style="top:591.43px;font-size:31.2px;font-weight:400;color:#626262;left:19.00px;transform:scaleX(0.939);transform-origin:left center;">2100</div>
<svg class="r" style="left:137.2px;top:589.8px" width="21" height="31.2" viewBox="-3 -3 21 31.2"><polyline points="1.70,1.70 13.30,12.60 1.70,23.50" fill="none" stroke="#2e6194" stroke-width="3.4" stroke-linecap="round" stroke-linejoin="round"/></svg>
<div class="t" style="top:591.43px;font-size:31.2px;font-weight:400;color:#626262;left:176.40px;transform:scaleX(0.939);transform-origin:left center;">(all)</div>
<svg class="r" style="left:320.2px;top:589.8px" width="21" height="31.2" viewBox="-3 -3 21 31.2"><polyline points="1.70,1.70 13.30,12.60 1.70,23.50" fill="none" stroke="#2e6194" stroke-width="3.4" stroke-linecap="round" stroke-linejoin="round"/></svg>
<div class="t" style="top:591.43px;font-size:31.2px;font-weight:400;color:#626262;left:359.00px;transform:scaleX(0.939);transform-origin:left center;">All Products</div>
<svg class="r" style="left:561px;top:595px" width="32" height="21.4" viewBox="-3 -3 32 21.4"><polyline points="1.70,1.70 13.00,13.70 24.30,1.70" fill="none" stroke="#2e6194" stroke-width="3.4" stroke-linecap="round" stroke-linejoin="round"/></svg>
<div class="t" style="top:591.43px;font-size:31.2px;font-weight:400;color:#626262;left:601.80px;transform:scaleX(0.939);transform-origin:left center;">Gross Profit</div>
<svg class="r" style="left:582px;top:828.8px" width="20.5" height="30.5" viewBox="-3 -3 20.5 30.5"><polyline points="1.70,1.70 12.80,12.25 1.70,22.80" fill="none" stroke="#2e6194" stroke-width="3.4" stroke-linecap="round" stroke-linejoin="round"/></svg>
<div class="t" style="top:828.78px;font-size:31.2px;font-weight:400;color:#626262;left:620.00px;transform:scaleX(0.939);transform-origin:left center;">Net Sales</div>
<div class="t" style="top:1067.18px;font-size:31.2px;font-weight:400;color:#626262;left:620.00px;transform:scaleX(0.939);transform-origin:left center;">Cost of Goods Sold</div>
<div class="t" style="top:1305.63px;font-size:31.2px;font-weight:400;color:#626262;left:620.00px;transform:scaleX(0.939);transform-origin:left center;">Gross Margin %</div>
<div class="r" style="left:4050.00px;top:188.50px;width:19.00px;height:1182.50px;background:#000;"></div>
</body></html>
